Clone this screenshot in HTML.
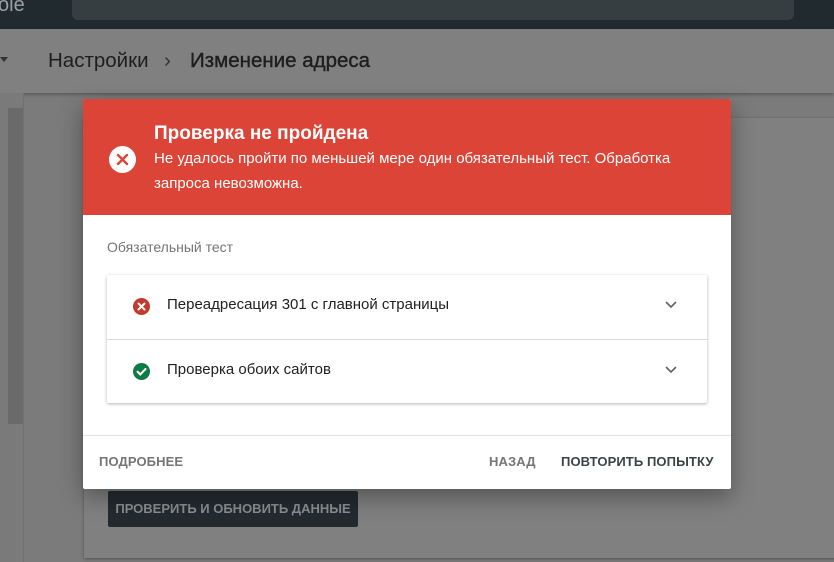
<!DOCTYPE html>
<html><head><meta charset="utf-8"><style>
*{margin:0;padding:0;box-sizing:border-box}
body{width:834px;height:562px;overflow:hidden;background:#7b7b7b;font-family:"Liberation Sans",Roboto,sans-serif;position:relative}
.top{position:absolute;left:0;top:0;width:834px;height:29px;background:#212a2f}
.search{position:absolute;left:72px;top:-10px;width:722px;height:30px;background:#363e42;border-radius:6px}
.logo{position:absolute;left:-2px;top:-6px;color:#9aa0a4;font-size:20px}
.crumb{position:absolute;left:0;top:29px;width:834px;height:64px;background:#808080;box-shadow:0 2px 3px rgba(0,0,0,.25)}
.crumb span{position:absolute;top:20px;font-size:20.5px;color:#1e1e1e}
.side{position:absolute;left:0;top:93px;width:24px;height:469px;background:#7a7a7a;border-right:1px solid #707070}
.sb{position:absolute;left:8px;top:108px;width:15px;height:316px;background:#6a6a6a}
.card{position:absolute;left:84px;top:118px;width:760px;height:440px;background:#808080;box-shadow:0 1px 3px rgba(0,0,0,.35)}
.btn{position:absolute;left:108px;top:491px;width:250px;height:36px;background:#232b30;border-radius:2px;color:#8a8e90;font-size:13px;font-weight:bold;line-height:36px;text-align:center}
.modal{position:absolute;left:83px;top:99px;width:648px;height:390px;background:#fff;border-radius:2px;box-shadow:0 8px 24px rgba(0,0,0,.35);overflow:hidden}
.hd{height:116px;background:#db4437;position:relative;color:#fff}
.hd .ic{position:absolute;left:26px;top:47px;width:27px;height:27px;border-radius:50%;background:#fff}
.hd h1{position:absolute;left:71px;top:24px;font-size:19px;font-weight:bold}
.hd p{position:absolute;left:71px;top:47px;width:540px;font-size:15px;line-height:25px}
.lbl{position:absolute;left:24px;top:140px;font-size:14px;color:#757575}
.list{position:absolute;left:24px;top:176px;width:600px;height:128px;background:#fff;box-shadow:0 1px 3px rgba(0,0,0,.3);border-radius:2px}
.row{height:64px;position:relative;font-size:15px;color:#212121}
.row+.row{border-top:1px solid #ddd}
.row span{position:absolute;left:60px;top:21px}
.row svg.s{position:absolute;left:26px;top:23px}
.row svg.c{position:absolute;left:557px;top:25px}
.ft{position:absolute;left:0;top:336px;width:648px;border-top:1px solid #e0e0e0;height:54px}
.ft span{position:absolute;top:18px;font-size:13px;font-weight:bold;letter-spacing:.1px}
</style></head><body>
<div class="top"><div class="logo">ole</div><div class="search"></div></div>
<div class="crumb"><span style="left:48px">Настройки</span><span style="left:164px;color:#333">›</span><span style="left:190px;-webkit-text-stroke:0.4px #1e1e1e">Изменение адреса</span>
<div style="position:absolute;left:0;top:28px;width:0;height:0;border-left:4px solid transparent;border-right:4px solid transparent;border-top:5px solid #333"></div></div>
<div class="side"></div><div class="sb"></div>
<div class="card"></div>
<div class="btn">ПРОВЕРИТЬ И ОБНОВИТЬ ДАННЫЕ</div>
<div class="modal">
 <div class="hd"><div class="ic"><svg width="27" height="27"><path d="M9 9L18 18M18 9L9 18" stroke="#db4437" stroke-width="2.4" stroke-linecap="round"/></svg></div>
 <h1>Проверка не пройдена</h1>
 <p>Не удалось пройти по меньшей мере один обязательный тест. Обработка<br>запроса невозможна.</p></div>
 <div class="lbl">Обязательный тест</div>
 <div class="list">
  <div class="row"><svg class="s" width="17" height="17"><circle cx="8.5" cy="8.5" r="8.5" fill="#c5392c"/><path d="M5.5 5.5L11.5 11.5M11.5 5.5L5.5 11.5" stroke="#fff" stroke-width="2" stroke-linecap="round"/></svg><span>Переадресация 301 с главной страницы</span><svg class="c" width="14" height="10"><path d="M2 2L7 7L12 2" fill="none" stroke="#5f6368" stroke-width="1.6"/></svg></div>
  <div class="row"><svg class="s" width="17" height="17"><circle cx="8.5" cy="8.5" r="8.5" fill="#0f7a45"/><path d="M4.5 8.7L7.3 11.4L12.5 6" fill="none" stroke="#fff" stroke-width="2" stroke-linecap="round"/></svg><span>Проверка обоих сайтов</span><svg class="c" width="14" height="10"><path d="M2 2L7 7L12 2" fill="none" stroke="#5f6368" stroke-width="1.6"/></svg></div>
 </div>
 <div class="ft"><span style="left:16px;color:#757575">ПОДРОБНЕЕ</span><span style="left:406px;color:#757575">НАЗАД</span><span style="left:478px;color:#3c4346">ПОВТОРИТЬ ПОПЫТКУ</span></div>
</div>
</body></html>
